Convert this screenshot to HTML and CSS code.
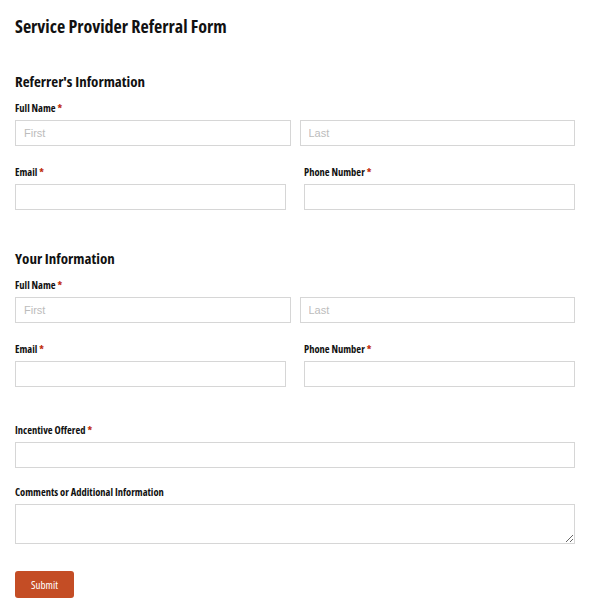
FILE: index.html
```html
<!DOCTYPE html>
<html>
<head>
<meta charset="utf-8">
<link rel="stylesheet" href="styles.css">
</head>
<body>
<form class="form">
  <h1 class="title">Service Provider Referral Form</h1>

  <h2 class="section">Referrer's Information</h2>
  <div class="field">
    <label class="label">Full Name <span class="req">*</span></label>
    <div class="name-row">
      <input class="input" type="text" placeholder="First">
      <input class="input" type="text" placeholder="Last">
    </div>
  </div>
  <div class="two-col">
    <div class="field">
      <label class="label">Email <span class="req">*</span></label>
      <input class="input" type="text">
    </div>
    <div class="field">
      <label class="label">Phone Number <span class="req">*</span></label>
      <input class="input" type="text">
    </div>
  </div>

  <h2 class="section section-second">Your Information</h2>
  <div class="field">
    <label class="label">Full Name <span class="req">*</span></label>
    <div class="name-row">
      <input class="input" type="text" placeholder="First">
      <input class="input" type="text" placeholder="Last">
    </div>
  </div>
  <div class="two-col">
    <div class="field">
      <label class="label">Email <span class="req">*</span></label>
      <input class="input" type="text">
    </div>
    <div class="field">
      <label class="label">Phone Number <span class="req">*</span></label>
      <input class="input" type="text">
    </div>
  </div>

  <div class="field field-incentive">
    <label class="label">Incentive Offered <span class="req">*</span></label>
    <input class="input" type="text">
  </div>
  <div class="field">
    <label class="label">Comments or Additional Information</label>
    <textarea class="input textarea"></textarea>
  </div>

  <button class="submit" type="button">Submit</button>
</form>
</body>
</html>
```
FILE: styles.css
```css
html, body {
  margin: 0;
  padding: 0;
  background: #fff;
}
body {
  font-family: "Open Sans", "Liberation Sans", sans-serif;
  color: #111;
}
.form {
  width: 560px;
  padding: 13px 15px 0 15px;
  display: flex;
  flex-direction: column;
}
.title {
  font-size: 18px;
  font-weight: 700;
  font-stretch: 75%;
  margin: 0 0 34px 0;
  line-height: 26px;
  color: #111;
}
.section {
  font-size: 15px;
  font-weight: 700;
  font-stretch: 75%;
  margin: 0 0 12px 0;
  line-height: 16px;
}
.section-second {
  margin-top: 21px;
}
.field {
  display: flex;
  flex-direction: column;
  margin-bottom: 19px;
}
.label {
  font-size: 10.5px;
  font-weight: 700;
  font-stretch: 75%;
  line-height: 14px;
  margin-bottom: 5px;
}
.req {
  color: #c02b0a;
}
.name-row {
  display: grid;
  grid-template-columns: 1fr 1fr;
  column-gap: 9px;
}
.two-col {
  display: grid;
  grid-template-columns: 1fr 1fr;
  column-gap: 18px;
}
.input {
  box-sizing: border-box;
  height: 26px;
  border: 1px solid #d6d6d6;
  border-radius: 0;
  padding: 0 8px;
  font-family: "Liberation Sans", Arial, sans-serif;
  font-size: 11px;
  background: #fff;
  width: 100%;
  margin: 0;
}
.input::placeholder {
  color: #bcbcbc;
}
.field-incentive {
  margin-top: 17px;
  margin-bottom: 17px;
}
.textarea {
  height: 40px;
  resize: vertical;
  padding: 6px 8px;
}
.submit {
  margin-top: 8px;
  align-self: flex-start;
  width: 59px;
  height: 27px;
  background: #c44d25;
  color: #fff;
  border: none;
  border-radius: 3px;
  font-family: "Open Sans", "Liberation Sans", sans-serif;
  font-stretch: 75%;
  font-size: 11px;
  padding: 0;
}
```
